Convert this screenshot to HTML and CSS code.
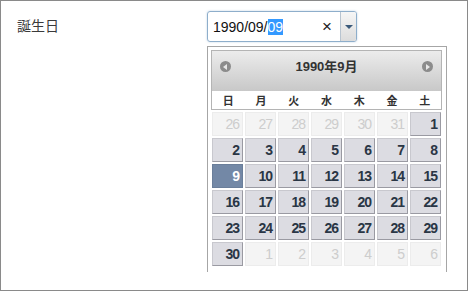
FILE: index.html
```html
<!DOCTYPE html>
<html lang="ja">
<head>
    <meta charset="UTF-8">
    <title>誕生日</title>
    <link rel="stylesheet" href="styles.css">
</head>
<body>
    <div class="frame">
        <div class="label">誕生日</div>

        <div class="field">
            <!-- Date input -->
            <div class="datebox">
                <div class="value">1990/09/<span class="sel">09</span></div>
                <span class="clear">×</span>
                <div class="drop"><span class="arrow"></span></div>
            </div>

            <!-- Calendar popup -->
            <div class="popup">
                <div class="cal-head">
                    <div class="title">
                        <span class="nav"><span class="tri prev"></span></span>
                        <span class="month">1990年9月</span>
                        <span class="nav"><span class="tri next"></span></span>
                    </div>
                    <div class="weekdays">
                        <span>日</span><span>月</span><span>火</span><span>水</span><span>木</span><span>金</span><span>土</span>
                    </div>
                </div>
                <div class="days" id="days"></div>
            </div>
        </div>
    </div>

    <script>
        // 1990年9月: 1日は土曜日
        var days = document.getElementById("days");
        var cells = [];
        for (var d = 26; d <= 31; d++) cells.push({ n: d, other: true });
        for (var d = 1; d <= 30; d++) cells.push({ n: d, other: false });
        for (var d = 1; d <= 6; d++) cells.push({ n: d, other: true });

        cells.forEach(function (c) {
            var el = document.createElement("div");
            el.className = "day" + (c.other ? " other" : "") + (!c.other && c.n === 9 ? " active" : "");
            el.textContent = c.n;
            days.appendChild(el);
        });
    </script>
</body>
</html>
```

FILE: styles.css
```css
* {
    margin: 0;
    padding: 0;
    box-sizing: border-box;
}

body {
    width: 468px;
    height: 292px;
    font-family: "Liberation Sans", Arial, "Noto Sans CJK JP", sans-serif;
    background: #fff;
    overflow: hidden;
}

.frame {
    width: 468px;
    height: 291px;
    border: 1px solid #8a8a8a;
    display: flex;
    padding: 10px 0 0 16px;
}

.label {
    width: 190px;
    padding-top: 6px;
    font-size: 14px;
    line-height: 16px;
    color: #3a3a3a;
    font-family: "Noto Sans CJK JP", sans-serif;
}

/* Date input */
.datebox {
    width: 150px;
    height: 31px;
    border: 1px solid #8eaecb;
    border-radius: 3px;
    display: flex;
    align-items: center;
    box-shadow: 0 0 2px rgba(120, 160, 200, 0.5);
}

.value {
    flex: 1;
    padding-left: 5px;
    font-size: 14px;
    color: #111;
}

.sel {
    background: #3399ff;
    color: #fff;
}

.clear {
    width: 18px;
    font-size: 17px;
    color: #222;
}

.drop {
    width: 16px;
    height: 29px;
    border-left: 1px solid #b8c4d0;
    border-radius: 0 2px 2px 0;
    background: linear-gradient(#f6f6f6, #dcdcdc);
    display: flex;
    align-items: center;
    justify-content: center;
}

.arrow {
    width: 0;
    height: 0;
    border-left: 4px solid transparent;
    border-right: 4px solid transparent;
    border-top: 4px solid #3b5a7a;
}

/* Calendar */
.popup {
    width: 240px;
    height: 226px;
    margin-top: 4px;
    border: 1px solid #a6a6a6;
    border-bottom: none;
    padding: 3px 4px 0 3px;
    background: #fff;
}

.cal-head {
    border: 1px solid #b4b4b4;
}

.title {
    height: 40px;
    background: linear-gradient(#ececec, #c8c8c8);
    display: flex;
    justify-content: space-between;
    padding: 9px 8px 0 8px;
}

.month {
    font-size: 13px;
    font-weight: bold;
    color: #333;
    line-height: 14px;
    font-family: "Liberation Sans", "Noto Sans CJK JP", sans-serif;
}

.nav {
    width: 11px;
    height: 11px;
    margin-top: 1px;
    border-radius: 50%;
    background: #8c8c8c;
    display: flex;
    align-items: center;
    justify-content: center;
}

.tri {
    width: 0;
    height: 0;
    border-top: 3px solid transparent;
    border-bottom: 3px solid transparent;
}

.tri.prev {
    border-right: 4px solid #e8e8e8;
    margin-right: 1px;
}

.tri.next {
    border-left: 4px solid #e8e8e8;
    margin-left: 1px;
}

.weekdays {
    height: 18px;
    display: grid;
    grid-template-columns: repeat(7, 1fr);
    align-items: center;
    text-align: center;
    font-size: 11px;
    font-weight: bold;
    color: #333;
    font-family: "Noto Sans CJK JP", sans-serif;
}

.days {
    margin: 2px 0 0 1px;
    display: grid;
    grid-template-columns: repeat(7, 31px);
    grid-auto-rows: 24px;
    gap: 2px;
}

.day {
    background: #dcdce2;
    border: 1px solid #c8c8ce;
    border-right-color: #9a9aa2;
    border-bottom-color: #9a9aa2;
    text-align: right;
    padding-right: 3px;
    line-height: 22px;
    font-size: 14px;
    font-weight: bold;
    letter-spacing: -1px;
    color: #2a3645;
}

.day.other {
    background: #f4f4f4;
    border-color: #ececec;
    font-weight: normal;
    color: #cdcdcd;
}

.day.active {
    background: #7388a6;
    border-color: #6a7e9a;
    color: #fff;
}
```
